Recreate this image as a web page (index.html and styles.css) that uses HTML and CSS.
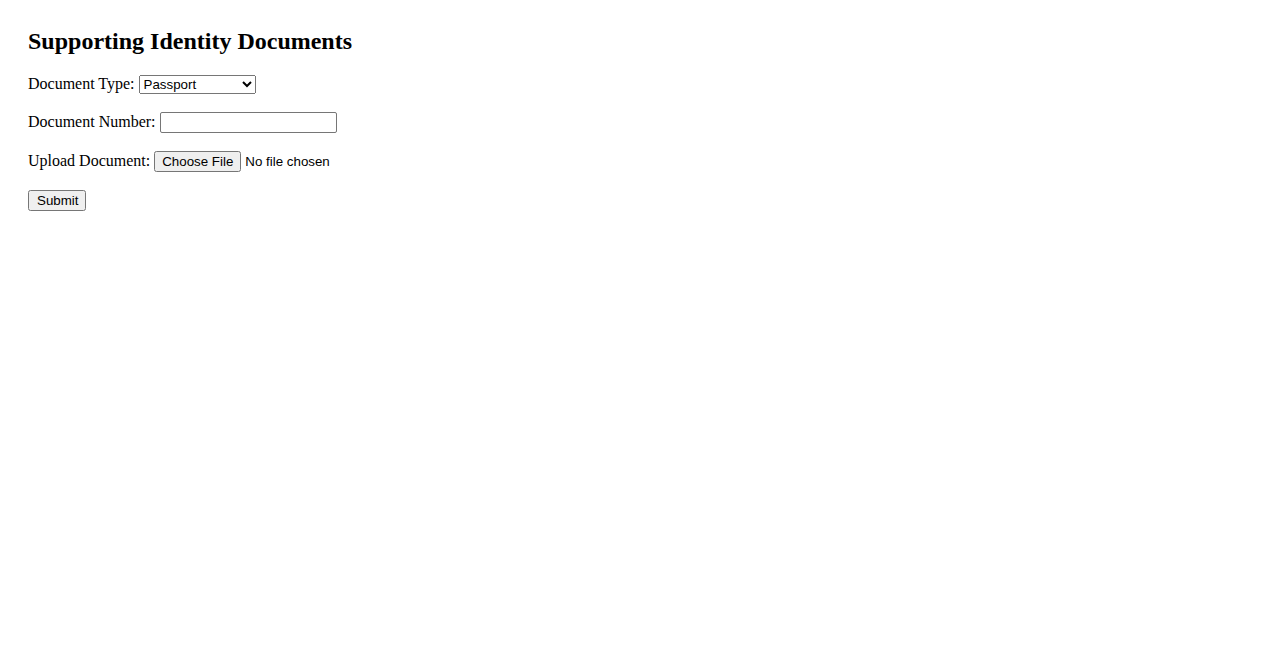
FILE: index.html
```html
<!DOCTYPE html>
<html>
<head>
<meta charset="utf-8">
<link rel="stylesheet" href="styles.css">
</head>
<body>
<div class="container">
  <h2 class="title">Supporting Identity Documents</h2>
  <form class="doc-form">
    <div class="row">
      <label for="docType">Document Type:</label>
      <select id="docType" class="field-select">
        <option>Passport</option>
        <option>Driver's License</option>
        <option>National ID Card</option>
      </select>
    </div>
    <div class="row">
      <label for="docNum">Document Number:</label>
      <input type="text" id="docNum" class="field-text">
    </div>
    <div class="row">
      <label for="docFile">Upload Document:</label>
      <input type="file" id="docFile" class="field-file">
    </div>
    <div class="row">
      <button type="submit" class="submit-btn">Submit</button>
    </div>
  </form>
</div>
</body>
</html>
```
FILE: styles.css
```css
body {
  margin: 8px;
  font-family: "Liberation Serif", "Times New Roman", serif;
  font-size: 16px;
  color: #000;
  background: #fff;
}
.container {
  padding: 20px;
}
.title {
  margin: 0 0 20px 0;
  font-size: 24px;
  font-weight: bold;
}
.row {
  margin-bottom: 18px;
}
.field-select,
.field-text,
.field-file,
.submit-btn {
  font-family: "Liberation Sans", Arial, sans-serif;
  font-size: 13.333px;
}
.field-select {
  width: 117px;
}
.field-text {
  box-sizing: border-box;
  width: 177px;
  height: 21px;
  border: 1px solid #767676;
  border-radius: 2px;
  padding: 1px 2px;
}
.submit-btn {
  padding: 1px 6px 1px 7px;
}
```
